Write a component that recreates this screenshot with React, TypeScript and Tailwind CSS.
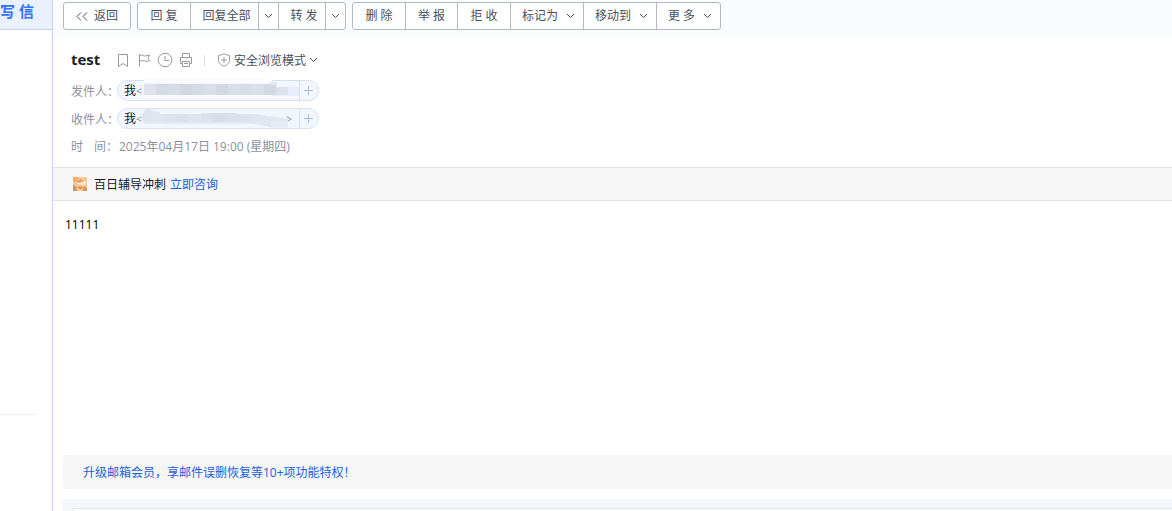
import React from 'react';
import { clsx } from 'clsx';

const Chevron = ({ className }: { className?: string }) => (
  <svg viewBox="0 0 9 6" className={clsx('h-[6px] w-[9px] shrink-0', className)} fill="none" stroke="currentColor">
    <path d="M1 1l3.500 3.500L8 1" />
  </svg>
);

interface ToolItem {
  label: string;
  width: string;
  menu?: boolean;
  split?: boolean;
}

const replyItems: ToolItem[] = [
  { label: '回 复', width: 'w-[53px]' },
  { label: '回复全部', width: 'w-[68px] pl-1', split: true },
  { label: '转 发', width: 'w-[47px] pl-1', split: true },
];

const manageItems: ToolItem[] = [
  { label: '删 除', width: 'w-[53px]' },
  { label: '举 报', width: 'w-[52px]' },
  { label: '拒 收', width: 'w-[53px]' },
  { label: '标记为', width: 'w-[73px] pl-[3px]', menu: true },
  { label: '移动到', width: 'w-[73px] pl-[3px]', menu: true },
  { label: '更 多', width: 'w-[63px] pl-[3px]', menu: true },
];

const ToolGroup = ({ items }: { items: ToolItem[] }) => (
  <div className="flex h-7 shrink-0 divide-x divide-[#b4b8c4] rounded-[3px] border border-[#b4b8c4] bg-white">
    {items.map((item) => (
      <React.Fragment key={item.label}>
        <button
          type="button"
          className={clsx('flex items-center justify-center whitespace-nowrap', item.width, item.menu && 'gap-2')}
        >
          {item.label}
          {item.menu && <Chevron />}
        </button>
        {item.split && (
          <button
            type="button"
            aria-label={`${item.label} 更多`}
            className="flex w-5 items-center justify-center last:w-[19px]"
          >
            <Chevron />
          </button>
        )}
      </React.Fragment>
    ))}
  </div>
);

const IconButton = ({ label, children }: { label: string; children: React.ReactNode }) => (
  <button type="button" aria-label={label} className="h-4 w-4">
    <svg viewBox="0 0 16 16" className="h-4 w-4" fill="none" stroke="#9a9a9a">
      {children}
    </svg>
  </button>
);

const Contact = ({ children, end }: { children: React.ReactNode; end?: string }) => (
  <div className="relative flex h-[21px] w-[202px] items-center rounded-full border border-[#d6e0f5] bg-[#f2f6ff]">
    <span className="pl-[6px] text-[#16181d]">我</span>
    <span className="flex-1 text-[11px] text-[#8a909c]">&lt;</span>
    <span className="pr-[7px] text-[10px] text-[#8a909c]">{end}</span>
    <button
      type="button"
      aria-label="添加联系人"
      className="flex h-full w-[19px] items-center justify-center border-l border-[#d6e0f5] pr-[2px]"
    >
      <svg viewBox="0 0 9 9" className="h-[9px] w-[9px]" stroke="#a9bce0">
        <path d="M0 4.500h9M4.500 0v9" />
      </svg>
    </button>
    {children}
  </div>
);

const senderCells = ['#dfe2ea', '#d5d9e4', '#d8dce6', '#d1d6e1', '#d5dae5', '#d9dde7', '#d3d7e2', '#d9dee8', '#d7dce6', '#d9dee8', '#d3d8e3'];
const receiverCells = ['#e0e5f0', '#dde2ed', '#dbe0eb', '#dfe4ef', '#dce1ec', '#d8dde9', '#dbe0eb', '#dce1ed', '#dfe4ef'];

export default function App() {
  return (
    <div className="flex min-h-screen bg-white font-['Open_Sans','Noto_Sans_CJK_SC',sans-serif] text-[12px] leading-4 text-[#4a4f5c]">
      <aside className="w-[53px] shrink-0 overflow-hidden border-r border-[#c3d3f5]">
        <button
          type="button"
          className="flex h-[30px] w-full items-center justify-end border-b border-[#c3d3f5] bg-[#e9f0ff] pr-[18px] pb-2 text-[15px] font-bold whitespace-nowrap text-[#3370ff]"
        >
          写 信
        </button>
        <hr className="mt-[384px] mr-4 border-[#ececec]" />
      </aside>

      <main className="flex min-w-0 flex-1 flex-col">
        <div className="flex h-[38px] gap-[6px] bg-[#fafbfd] pt-[2px] pl-[10px]">
          <button
            type="button"
            className="flex h-7 w-[68px] shrink-0 items-center justify-center gap-[6px] rounded-[3px] border border-[#b4b8c4] bg-white"
          >
            <svg viewBox="0 0 12 9" className="h-[9px] w-[12px]" fill="none" stroke="currentColor">
              <path d="M5 .5l-4 4 4 4M11 .5l-4 4 4 4" />
            </svg>
            返回
          </button>
          <ToolGroup items={replyItems} />
          <ToolGroup items={manageItems} />
        </div>

        <header className="flex h-[129px] flex-col pt-3 pl-[18px]">
          <div className="flex h-5 items-center">
            <h1 className="w-11 pb-[2px] text-[15px] font-bold text-[#1d2129]">test</h1>
            <div className="flex gap-[5px]">
              <IconButton label="书签">
                <path d="M3.500 2.500h9v12l-4.500-3-4.500 3z" />
              </IconButton>
              <IconButton label="旗标">
                <path d="M3.500 2v12.500M3.500 3.500c3-1.500 4 1 6 .5l4-1-1.500 3 1.500 3c-3 1-4-.5-6-.5l-4 .5" />
              </IconButton>
              <IconButton label="稍后处理">
                <circle cx="8" cy="8" r="6.800" />
                <path d="M8 4v4.500h4" />
              </IconButton>
              <IconButton label="打印">
                <path d="M4.500 5.500v-4h7v4M4.500 11.500h-2v-6h11v6h-2M4.500 9.500h7v5h-7zM6 11.500h4" />
              </IconButton>
            </div>
            <span className="mr-3 ml-[10px] h-[11px] border-l border-[#dcdfe6]" />
            <button type="button" className="flex items-center gap-[3px]">
              <svg viewBox="0 0 14 14" className="h-[14px] w-[14px]" fill="none" stroke="#9a9a9a">
                <path d="M7 .8l5.500 1.700v5c0 2.500-2.500 4.500-5.500 5.700-3-1.200-5.500-3.200-5.500-5.700v-5zM7 4v6M4 7h6" />
              </svg>
              <span className="pt-px">安全浏览模式</span>
              <Chevron />
            </button>
          </div>

          <dl className="mt-[10px] flex flex-col gap-[7px] whitespace-nowrap text-[#8b919e]">
            <div className="flex h-[21px] items-center">
              <dt className="w-[46px] pt-[2px]">发件人：</dt>
              <dd>
                <Contact>
                  <svg viewBox="0 0 155 22" className="absolute -top-[3px] left-[26px] h-[22px] w-[155px]" shapeRendering="crispEdges">
                    <path d="M0 0h118l10 2v3H0zM0 17h155v3H0z" fill="#fafbfe" />
                    <path d="M128 9h27v9h-27z" fill="#e8eefb" />
                    {senderCells.map((fill, i) => (
                      <rect key={i} x={i * 12} y="6" width="12" height="11" fill={fill} />
                    ))}
                    <path d="M126 4h7v3h-7z" fill="#e3e7f0" />
                    <path d="M132 9h12v8h-12z" fill="#dde1eb" />
                  </svg>
                </Contact>
              </dd>
            </div>
            <div className="flex h-[21px] items-center">
              <dt className="w-[46px] pt-[2px]">收件人：</dt>
              <dd>
                <Contact end=">">
                  <svg viewBox="0 0 150 24" className="absolute -top-[3px] left-[23px] h-[24px] w-[150px]" shapeRendering="crispEdges">
                    <path d="M0 11l4-7 5-3 2 4 8 1v12H4z" fill="#dfe4ef" />
                    {receiverCells.map((fill, i) => (
                      <rect key={i} x={i * 12 + 12} y={i === 4 || i === 5 || i === 6 ? 7 : 8} width="12" height="10" fill={fill} />
                    ))}
                    <path d="M8 16h118v2H8z" fill="#e5eaf4" />
                    <path d="M108 8l22 2 17 3v8h-17l-22-4z" fill="#e0e5ef" />
                    <path d="M130 15h17v7h-17z" fill="#e6ebf5" />
                  </svg>
                </Contact>
              </dd>
            </div>
            <div className="flex h-[21px] items-center">
              <dt className="flex w-12">
                <span className="w-[23px]">时</span>间：
              </dt>
              <dd>2025年04月17日 19:00 (星期四)</dd>
            </div>
          </dl>
        </header>

        <div className="flex h-[34px] items-center border-y border-[#e2e2e2] bg-[#f7f7f7] pl-5 text-[#16181d]">
          <svg viewBox="0 0 14 14" className="mr-[7px] h-[14px] w-[14px]">
            <rect width="14" height="14" fill="#f6c995" />
            <path d="M0 0h6l-3 4-3 1z" fill="#f3ad62" />
            <path d="M8 4h5v4H9z" fill="#fbe9cf" />
            <path d="M3 4l5-2 3 2-4 2-3-1z" fill="#eba066" />
            <path d="M4 11l3-2 4 2-3 1z" fill="#e78a4c" />
            <path d="M0 8l3 1 1 5H0zM11 9l3 2v3h-4z" fill="#cf9468" />
            <path d="M4 6h6l-3 2z" fill="#fff3df" />
          </svg>
          <span className="pt-[2px]">百日辅导冲刺</span>
          <a href="#consult" className="ml-1 pt-[2px] text-[#1a5fdc]">
            立即咨询
          </a>
        </div>

        <article className="flex-1 pt-4 pl-3 text-black">11111</article>

        <div className="ml-[10px] flex h-[34px] items-center rounded-l-[2px] bg-[#f6f6f6] pl-5">
          <a href="#vip" className="pt-[2px] text-[#1a5fdc]">
            升级邮箱会员，享邮件误删恢复等10+项功能特权！
          </a>
        </div>

        <div className="mt-[10px] ml-[10px] rounded-tl-[2px] bg-[#f4f6fb] pt-[9px] pl-[9px]">
          <div className="h-[3px] rounded-tl-[3px] border-t border-l border-[#e3e5e8] bg-white" />
        </div>
      </main>
    </div>
  );
}
